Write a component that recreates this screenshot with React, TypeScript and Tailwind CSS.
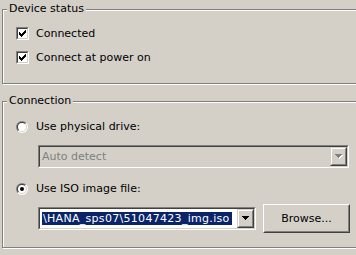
import React from "react";

const Check = () => (
  <svg width="7" height="7" viewBox="0 0 7 7" shapeRendering="crispEdges" className="block m-px">
    <rect x="6" y="0" width="1" height="1" fill="#000" />
    <rect x="5" y="1" width="2" height="1" fill="#000" />
    <rect x="0" y="2" width="1" height="1" fill="#000" />
    <rect x="4" y="2" width="3" height="1" fill="#000" />
    <rect x="0" y="3" width="2" height="1" fill="#000" />
    <rect x="3" y="3" width="3" height="1" fill="#000" />
    <rect x="0" y="4" width="5" height="1" fill="#000" />
    <rect x="1" y="5" width="3" height="1" fill="#000" />
    <rect x="2" y="6" width="1" height="1" fill="#000" />
  </svg>
);

const CheckBox = ({ label }: { label: string }) => (
  <div className="flex items-center gap-[7px] h-[13px]">
    <span className="block w-[13px] h-[13px] border border-t-[#808080] border-l-[#808080] border-b-white border-r-white">
      <span className="block w-full h-full border border-t-[#404040] border-l-[#404040] border-b-[#d4d0c8] border-r-[#d4d0c8] bg-white">
        <Check />
      </span>
    </span>
    <span>{label}</span>
  </div>
);

const Radio = ({ label, checked }: { label: string; checked?: boolean }) => (
  <div className="flex items-center gap-[8px] h-[13px]">
    <svg width="12" height="12" viewBox="0 0 12 12" className="block">
      <defs>
        <linearGradient id="rOuter" x1="0" y1="0" x2="1" y2="1">
          <stop offset="0.5" stopColor="#808080" />
          <stop offset="0.5" stopColor="#ffffff" />
        </linearGradient>
        <linearGradient id="rInner" x1="0" y1="0" x2="1" y2="1">
          <stop offset="0.5" stopColor="#404040" />
          <stop offset="0.5" stopColor="#d4d0c8" />
        </linearGradient>
      </defs>
      <circle cx="6" cy="6" r="6" fill="url(#rOuter)" />
      <circle cx="6" cy="6" r="5" fill="url(#rInner)" />
      <circle cx="6" cy="6" r="4" fill="#fff" />
      {checked && <circle cx="6" cy="6" r="2" fill="#000" />}
    </svg>
    <span>{label}</span>
  </div>
);

const Arrow = ({ disabled }: { disabled?: boolean }) => (
  <svg width="8" height="5" viewBox="0 0 8 5" shapeRendering="crispEdges" className="block">
    {disabled && <path d="M1 1h7v1h-1v1h-1v1h-1v1h-1v-1h-1v-1h-1v-1h-1z" fill="#fff" />}
    <path d="M0 0h7v1h-1v1h-1v1h-1v1h-1v-1h-1v-1h-1v-1h-1z" fill={disabled ? "#808080" : "#000"} />
  </svg>
);

const DropButton = ({ disabled }: { disabled?: boolean }) => (
  <span className="flex w-[17px] h-full border border-t-[#d4d0c8] border-l-[#d4d0c8] border-b-[#404040] border-r-[#404040]">
    <span className="flex flex-1 items-center justify-center border border-t-white border-l-white border-b-[#808080] border-r-[#808080] bg-[#d4d0c8]">
      <Arrow disabled={disabled} />
    </span>
  </span>
);

const Combo = ({
  width,
  disabled,
  children,
}: {
  width: string;
  disabled?: boolean;
  children: React.ReactNode;
}) => (
  <div className={`${width} h-[23px] border border-t-[#808080] border-l-[#808080] border-b-white border-r-white`}>
    <div
      className={`flex h-full border border-t-[#404040] border-l-[#404040] border-b-[#d4d0c8] border-r-[#d4d0c8] ${
        disabled ? "bg-[#d4d0c8]" : "bg-white"
      }`}
    >
      <div className="flex flex-1 items-center overflow-hidden pl-[2px]">{children}</div>
      <DropButton disabled={disabled} />
    </div>
  </div>
);

const GroupBox = ({
  title,
  height,
  className,
  children,
}: {
  title: string;
  height: string;
  className?: string;
  children: React.ReactNode;
}) => (
  <div
    className={`relative w-[380px] ${height} border border-[#808080] shadow-[1px_1px_0_#fff,inset_1px_1px_0_#fff] ${className ?? ""}`}
  >
    <span className="absolute left-[4px] top-[-8px] px-[2px] bg-[#d4d0c8]">{title}</span>
    {children}
  </div>
);

export default function App() {
  return (
    <div className="w-[356px] h-[255px] overflow-hidden bg-[#d4d0c8] pt-[9px] pl-[2px] font-['DejaVu_Sans',sans-serif] text-[11px] leading-[13px] text-black">
      <GroupBox title="Device status" height="h-[75px]">
        <div className="flex flex-col gap-[11px] pt-[17px] pl-[13px]">
          <CheckBox label="Connected" />
          <CheckBox label="Connect at power on" />
        </div>
      </GroupBox>

      <GroupBox title="Connection" height="h-[147px]" className="mt-[17px]">
        <div className="flex flex-col pt-[18px] pl-[13px]">
          <Radio label="Use physical drive:" />
          <div className="pl-[22px] mt-[12px]">
            <Combo width="w-[311px]" disabled>
              <span className="text-[#808080]">Auto detect</span>
            </Combo>
          </div>
          <div className="mt-[14px]">
            <Radio label="Use ISO image file:" checked />
          </div>
          <div className="flex items-center gap-[7px] pl-[22px] mt-[9px]">
            <Combo width="w-[218px]">
              <span className="bg-[#0a246a] text-white whitespace-nowrap pl-[1px] pr-[2px] tracking-[0.3px]">
                \HANA_sps07\51047423_img.iso
              </span>
            </Combo>
            <button className="w-[87px] h-[29px] border border-t-white border-l-white border-b-[#404040] border-r-[#404040] bg-[#d4d0c8]">
              <span className="flex h-full items-center justify-center border border-t-[#d4d0c8] border-l-[#d4d0c8] border-b-[#808080] border-r-[#808080]">
                Browse...
              </span>
            </button>
          </div>
        </div>
      </GroupBox>
    </div>
  );
}
